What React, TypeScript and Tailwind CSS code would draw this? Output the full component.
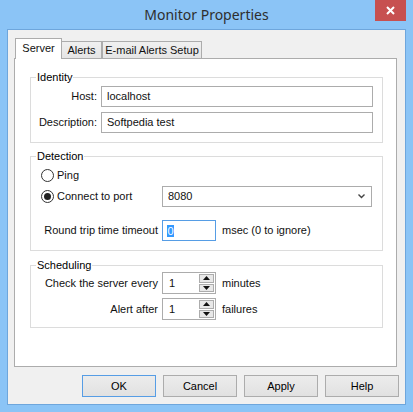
import type { ReactNode } from "react";

const SpinArrow = ({ up }: { up?: boolean }) => (
  <svg width="7" height="4" viewBox="0 0 7 4" className="block">
    <path d={up ? "M0 4 L3.5 0 L7 4 Z" : "M0 0 L3.5 4 L7 0 Z"} fill="#111" />
  </svg>
);

const Group = ({ title, className = "", children }: { title: string; className?: string; children: ReactNode }) => (
  <fieldset className={`border border-[#dcdcdc] mx-[15px] mr-[13px] ${className}`}>
    <legend className="ml-[5px] px-[1px] leading-[14px] text-black">{title}</legend>
    {children}
  </fieldset>
);

const Radio = ({ checked }: { checked?: boolean }) => (
  <span className="w-[13px] h-[13px] rounded-full border border-[#333] bg-white flex items-center justify-center shrink-0">
    {checked && <span className="w-[7px] h-[7px] rounded-full bg-[#222]" />}
  </span>
);

const Spinner = ({ value }: { value: string }) => (
  <div className="w-[54px] h-[22px] border border-[#acacac] bg-white flex">
    <span className="flex-1 pl-[6px] leading-[20px]">{value}</span>
    <div className="w-[16px] flex flex-col gap-px py-px pr-px">
      <span className="flex-1 border border-[#acacac] bg-[#e8e8e8] flex items-center justify-center">
        <SpinArrow up />
      </span>
      <span className="flex-1 border border-[#acacac] bg-[#e8e8e8] flex items-center justify-center">
        <SpinArrow />
      </span>
    </div>
  </div>
);

const Button = ({ label, primary }: { label: string; primary?: boolean }) => (
  <button
    className={`w-[74px] h-[22px] border bg-gradient-to-b from-[#ececec] to-[#e1e1e1] text-black ${primary ? "border-[#569de5]" : "border-[#acacac]"}`}
  >
    {label}
  </button>
);

export default function App() {
  return (
    <div className="w-[413px] h-[412px] bg-[#8bc4f6] flex flex-col font-['Liberation_Sans',Arial,sans-serif] text-[11px] text-[#111]">
      <div className="relative h-[29px] flex items-center justify-center">
        <span className="font-['Noto_Sans',sans-serif] text-[14px] text-[#2e2e2e]">Monitor Properties</span>
        <div className="absolute top-0 right-[7px] w-[31px] h-[21px] bg-[#c75050] flex items-center justify-center">
          <svg width="9" height="9" viewBox="0 0 9 9">
            <path d="M1 1 L8 8 M8 1 L1 8" stroke="#fff" strokeWidth="2" />
          </svg>
        </div>
      </div>

      <div className="mx-[7px] mb-[7px] flex-1 bg-[#f0f0f0] border border-[#6ea6dc] flex flex-col pt-[8px] px-[6px] pb-[7px]">
        <div className="relative z-10 flex items-end h-[20px] ml-px">
          <div className="w-[47px] h-[21px] -mb-px bg-white border border-b-0 border-[#acacac] flex items-center justify-center pb-[2px]">
            Server
          </div>
          <div className="w-[40px] h-[17px] border border-b-0 border-l-0 border-[#acacac] bg-gradient-to-b from-[#f0f0f0] to-[#e5e5e5] flex items-center justify-center">
            Alerts
          </div>
          <div className="w-[100px] h-[17px] border border-b-0 border-[#acacac] bg-gradient-to-b from-[#f0f0f0] to-[#e5e5e5] flex items-center justify-center">
            E-mail Alerts Setup
          </div>
        </div>

        <div className="flex-1 mr-[2px] bg-white border border-[#acacac] pt-[11px] flex flex-col">
          <Group title="Identity" className="pt-[2px] pb-[9px]">
            <div className="flex flex-col gap-[5px]">
              <div className="flex items-center gap-[4px]">
                <span className="w-[66px] text-right">Host:</span>
                <div className="w-[272px] h-[21px] border border-[#acacac] pl-[5px] leading-[19px]">localhost</div>
              </div>
              <div className="flex items-center gap-[4px]">
                <span className="w-[66px] text-right">Description:</span>
                <div className="w-[272px] h-[21px] border border-[#acacac] pl-[5px] leading-[19px]">Softpedia test</div>
              </div>
            </div>
          </Group>

          <Group title="Detection" className="mt-[6px] pt-[4px] pb-[9px]">
            <div className="flex items-center gap-[3px] pl-[10px] h-[16px]">
              <Radio />
              <span>Ping</span>
            </div>
            <div className="flex items-center pl-[10px] mt-[3px]">
              <div className="w-[121px] flex items-center gap-[3px]">
                <Radio checked />
                <span>Connect to port</span>
              </div>
              <div className="w-[210px] h-[21px] border border-[#acacac] bg-white flex items-center pl-[5px] pr-[6px]">
                <span className="flex-1">8080</span>
                <svg width="7" height="5" viewBox="0 0 7 5">
                  <path d="M0.5 0.5 L3.5 3.5 L6.5 0.5" stroke="#444" strokeWidth="1.4" fill="none" />
                </svg>
              </div>
            </div>
            <div className="flex items-center gap-[4px] mt-[13px]">
              <span className="w-[127px] text-right">Round trip time timeout</span>
              <div className="w-[54px] h-[21px] border border-[#569de5] bg-white flex items-center pl-[4px]">
                <span className="bg-[#3399ff] text-white leading-[12px] px-[0.5px]">0</span>
              </div>
              <span className="ml-[2px]">msec (0 to ignore)</span>
            </div>
          </Group>

          <Group title="Scheduling" className="mt-[7px] pb-[7px]">
            <div className="flex flex-col gap-[4px]">
              <div className="flex items-center gap-[4px]">
                <span className="w-[127px] text-right">Check the server every</span>
                <Spinner value="1" />
                <span className="ml-[2px]">minutes</span>
              </div>
              <div className="flex items-center gap-[4px]">
                <span className="w-[127px] text-right">Alert after</span>
                <Spinner value="1" />
                <span className="ml-[2px]">failures</span>
              </div>
            </div>
          </Group>
        </div>

        <div className="flex justify-end gap-[7px] mt-[8px]">
          <Button label="OK" primary />
          <Button label="Cancel" />
          <Button label="Apply" />
          <Button label="Help" />
        </div>
      </div>
    </div>
  );
}
